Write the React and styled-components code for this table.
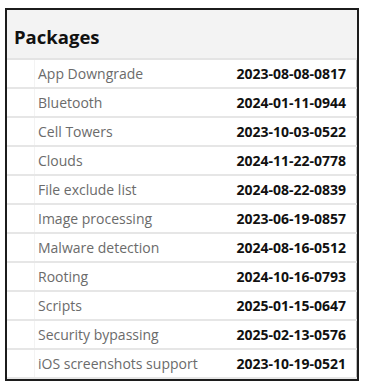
import React from "react";
import styled, { createGlobalStyle } from "styled-components";

const packages = [
  ["App Downgrade", "2023-08-08-0817"],
  ["Bluetooth", "2024-01-11-0944"],
  ["Cell Towers", "2023-10-03-0522"],
  ["Clouds", "2024-11-22-0778"],
  ["File exclude list", "2024-08-22-0839"],
  ["Image processing", "2023-06-19-0857"],
  ["Malware detection", "2024-08-16-0512"],
  ["Rooting", "2024-10-16-0793"],
  ["Scripts", "2025-01-15-0647"],
  ["Security bypassing", "2025-02-13-0576"],
  ["iOS screenshots support", "2023-10-19-0521"],
];

function App() {
  return (
    <>
      <GlobalStyle />
      <Panel>
        <Header>Packages</Header>
        {packages.map(([name, version]) => (
          <Row key={name}>
            <Indent />
            <Name>{name}</Name>
            <Version>{version}</Version>
          </Row>
        ))}
      </Panel>
    </>
  );
}

export default App;

const GlobalStyle = createGlobalStyle`
  body {
    margin: 0;
    background: #fff;
    font-family: "Open Sans", "Liberation Sans", sans-serif;
  }
`;

const Panel = styled.div`
  margin: 8px 0 0 5px;
  width: 354px;
  height: 373px;
  box-sizing: border-box;
  border: 2px solid #1c1c1c;
  box-shadow: inset -1px -1px 0 #bdbdbd;
  background: #fff;
  overflow: hidden;
`;

const Header = styled.div`
  height: 50px;
  display: flex;
  align-items: center;
  padding: 5px 0 0 7px;
  box-sizing: border-box;
  background: #f3f3f3;
  border-bottom: 2px solid #e4e4e4;
  font-size: 18.5px;
  font-weight: 700;
  color: #111;
`;

const Row = styled.div`
  height: 29px;
  display: grid;
  grid-template-columns: 28px 1fr auto;
  align-items: stretch;
  box-sizing: border-box;
  border-bottom: 2px solid #e6e6e6;
  font-size: 14px;
`;

const Indent = styled.div`
  border-right: 1px solid #f3f3f3;
`;

const Name = styled.div`
  display: flex;
  align-items: center;
  padding-left: 3px;
  color: #6b6b6b;
`;

const Version = styled.div`
  display: flex;
  align-items: center;
  padding-right: 11px;
  font-weight: 700;
  color: #111;
`;
